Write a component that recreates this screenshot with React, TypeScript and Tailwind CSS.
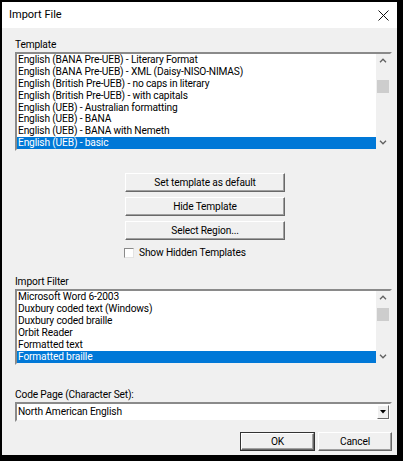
import React from "react";

const templates = [
  "English (BANA Pre-UEB) - Literary Format",
  "English (BANA Pre-UEB) - XML (Daisy-NISO-NIMAS)",
  "English (British Pre-UEB) - no caps in literary",
  "English (British Pre-UEB) - with capitals",
  "English (UEB) - Australian formatting",
  "English (UEB) - BANA",
  "English (UEB) - BANA with Nemeth",
  "English (UEB) - basic",
];

const filters = [
  "Microsoft Word 6-2003",
  "Duxbury coded text (Windows)",
  "Duxbury coded braille",
  "Orbit Reader",
  "Formatted text",
  "Formatted braille",
];

const Chevron = ({ up }: { up?: boolean }) => (
  <svg width="8" height="5" viewBox="0 0 8 5">
    <path
      d={up ? "M1 4.2 L4 1.2 L7 4.2" : "M1 0.8 L4 3.8 L7 0.8"}
      fill="none"
      stroke="#606060"
      strokeWidth="1.3"
    />
  </svg>
);

interface ListProps {
  items: string[];
  selected: number;
  height: string;
  thumbTop: string;
}

const ListBox: React.FC<ListProps> = ({ items, selected, height, thumbTop }) => (
  <div
    className={`flex ${height} bg-white border-2 border-t-[#8a8a8a] border-l-[#8a8a8a] border-r-[#f0f0f0] border-b-[#f0f0f0]`}
  >
    <div className="flex-1 flex flex-col">
      {items.map((t, i) => (
        <div
          key={t}
          className={`h-[12.2px] leading-[12.2px] pl-[1px] whitespace-nowrap overflow-hidden ${
            i === selected ? "bg-[#0078d7] text-white" : "text-black"
          }`}
        >
          {t}
        </div>
      ))}
    </div>
    <div className="w-[14px] bg-[#f0f0f0] flex flex-col items-center relative">
      <div className="h-[13px] flex items-center justify-center">
        <Chevron up />
      </div>
      <div className={`absolute left-[1px] right-[1px] h-[13px] bg-[#cdcdcd] ${thumbTop}`} />
      <div className="flex-1" />
      <div className="h-[13px] flex items-center justify-center">
        <Chevron />
      </div>
    </div>
  </div>
);

const Btn: React.FC<{ children: React.ReactNode; className?: string }> = ({
  children,
  className = "",
}) => (
  <div
    className={`h-[19px] flex items-center justify-center bg-[#f0f0f0] border border-t-white border-l-white border-r-[#696969] border-b-[#696969] shadow-[inset_-1px_-1px_0_#a0a0a0] text-black ${className}`}
  >
    {children}
  </div>
);

export default function App() {
  return (
    <div
      className="w-[403px] h-[461px] bg-black pt-[2px] pl-[2px] pr-[6px] pb-[6px] text-[10.2px] tracking-[-0.15px]"
      style={{ fontFamily: 'Roboto, "Noto Sans", sans-serif' }}
    >
      <div className="w-full h-full flex flex-col bg-[#f0f0f0]">
        <div className="h-[26px] bg-white flex items-center justify-between pl-[7px] pr-[8px]">
          <span className="text-[11px] tracking-normal text-black">Import File</span>
          <svg width="11" height="11" viewBox="0 0 11 11">
            <path d="M0.5 0.5 L10.5 10.5 M10.5 0.5 L0.5 10.5" stroke="#111" strokeWidth="1" />
          </svg>
        </div>
        <div className="flex-1 flex flex-col pl-[13px] pr-[5px] pt-[10px]">
          <div className="h-[13px] leading-[13px] text-black">Template</div>
          <div className="mt-[1px]">
            <ListBox items={templates} selected={7} height="h-[99px]" thumbTop="top-[26px]" />
          </div>
          <div className="flex flex-col items-start pl-[110px] mt-[22px] gap-[5px]">
            <Btn className="w-[160px]">Set template as default</Btn>
            <Btn className="w-[160px]">Hide Template</Btn>
            <Btn className="w-[160px]">Select Region...</Btn>
            <div className="flex items-center gap-[5px] ml-[-1px] mt-[2px] h-[12px]">
              <div className="w-[10px] h-[10px] bg-white border border-t-[#8a8a8a] border-l-[#8a8a8a] border-r-[#e3e3e3] border-b-[#e3e3e3]" />
              <span className="text-black">Show Hidden Templates</span>
            </div>
          </div>
          <div className="h-[13px] leading-[13px] text-black mt-[16px]">Import Filter</div>
          <div className="mt-[1px]">
            <ListBox items={filters} selected={5} height="h-[76px]" thumbTop="top-[17px]" />
          </div>
          <div className="h-[13px] leading-[13px] text-black mt-[23px]">Code Page (Character Set):</div>
          <div className="mt-[1px] h-[20px] flex items-center bg-white border-2 border-t-[#8a8a8a] border-l-[#8a8a8a] border-r-[#f0f0f0] border-b-[#f0f0f0]">
            <span className="flex-1 pl-[1px] text-black">North American English</span>
            <div className="w-[12px] h-[14px] mr-[1px] flex items-center justify-center bg-[#f0f0f0] border border-t-white border-l-white border-r-[#696969] border-b-[#696969]">
              <svg width="6" height="4" viewBox="0 0 6 4">
                <path d="M0 0 H6 L3 3.5 Z" fill="#000" />
              </svg>
            </div>
          </div>
          <div className="flex justify-end gap-[3px] mt-[10px]">
            <div className="w-[75px] h-[19px] border border-[#333]">
              <Btn className="h-full border-t-[#f8f8f8]">OK</Btn>
            </div>
            <Btn className="w-[74px]">Cancel</Btn>
          </div>
        </div>
      </div>
    </div>
  );
}
